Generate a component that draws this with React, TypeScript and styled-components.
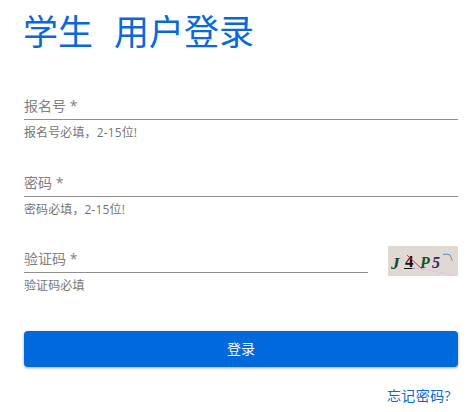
import styled, { createGlobalStyle } from "styled-components";

const Global = createGlobalStyle`
  html, body { margin: 0; padding: 0; background: #fff; }
  body { font-family: "Open Sans", "Noto Sans CJK SC", sans-serif; }
`;

const Page = styled.div`
  width: 472px;
  height: 412px;
  padding: 0 14px 0 24px;
  box-sizing: border-box;
  overflow: hidden;
`;

const Title = styled.h1`
  margin: 0 0 0 -1px;
  height: 64px;
  display: flex;
  gap: 21px;
  align-items: center;
  font-size: 35px;
  font-weight: 400;
  line-height: 64px;
  color: #0a68d8;
`;

const Form = styled.form`
  display: flex;
  flex-direction: column;
  padding-top: 31px;
`;

const Field = styled.div<{ $gap: number }>`
  margin-bottom: ${(p) => p.$gap}px;
`;

const Label = styled.div`
  height: 24px;
  display: flex;
  align-items: flex-start;
  font-size: 14px;
  line-height: 22px;
  color: #808080;
  border-bottom: 1px solid #8f8f8f;
`;

const Help = styled.p`
  margin: 5px 0 0;
  font-size: 12px;
  line-height: 16px;
  letter-spacing: 0.12px;
  color: #757575;
`;

const CaptchaRow = styled.div`
  display: flex;
  gap: 20px;
`;

const CaptchaField = styled.div`
  flex: 1;
  padding-top: 2px;
`;

const Captcha = styled.svg`
  width: 70px;
  height: 30px;
  display: block;
  background: #e0d8d3;
`;

const Submit = styled.button`
  height: 36px;
  padding: 0 0 2px;
  border: none;
  border-radius: 4px;
  background: #006adc;
  color: #fff;
  font: 400 14px "Open Sans", "Noto Sans CJK SC", sans-serif;
  box-shadow: 0 1px 3px rgba(0, 0, 0, 0.35);
`;

const Foot = styled.div`
  display: flex;
  justify-content: flex-end;
  padding: 19px 7px 0 0;
`;

const Forgot = styled.a`
  font-size: 14px;
  line-height: 20px;
  letter-spacing: 0.4px;
  color: #0a68d8;
`;

export default function App() {
  return (
    <Page>
      <Global />
      <Title>
        <span>学生</span>
        <span>用户登录</span>
      </Title>
      <Form>
        <Field $gap={31}>
          <Label>报名号 *</Label>
          <Help>报名号必填，2-15位!</Help>
        </Field>
        <Field $gap={28}>
          <Label>密码 *</Label>
          <Help>密码必填，2-15位!</Help>
        </Field>
        <Field $gap={37}>
          <CaptchaRow>
            <CaptchaField>
              <Label>验证码 *</Label>
              <Help>验证码必填</Help>
            </CaptchaField>
            <Captcha viewBox="0 0 70 30">
              <text x="3" y="23" fontFamily="Liberation Serif" fontStyle="italic" fontWeight="700" fontSize="17" fill="#0a4a2a">J</text>
              <text x="17" y="21" fontFamily="Liberation Serif" fontWeight="700" fontSize="17" fill="#111">4</text>
              <path d="M16 22.5 H27" stroke="#111" strokeWidth="1" fill="none" />
              <text x="32" y="22" fontFamily="Liberation Serif" fontStyle="italic" fontWeight="700" fontSize="16" fill="#0a5a2a">P</text>
              <text x="44" y="22" fontFamily="Liberation Serif" fontStyle="italic" fontWeight="700" fontSize="16" fill="#3a2560">5</text>
              <path d="M19 9 L35 24" stroke="#e0303a" fill="none" />
              <path d="M24 22 Q44 24 65 29.5" stroke="#e2c4ea" strokeWidth="1.2" fill="none" />
              <path d="M55 8.5 Q59 7.5 62 9" stroke="#5a86d0" fill="none" />
              <path d="M62 9 L64.5 15" stroke="#9a8a9a" fill="none" />
            </Captcha>
          </CaptchaRow>
        </Field>
        <Submit type="button">登录</Submit>
      </Form>
      <Foot>
        <Forgot>忘记密码?</Forgot>
      </Foot>
    </Page>
  );
}
